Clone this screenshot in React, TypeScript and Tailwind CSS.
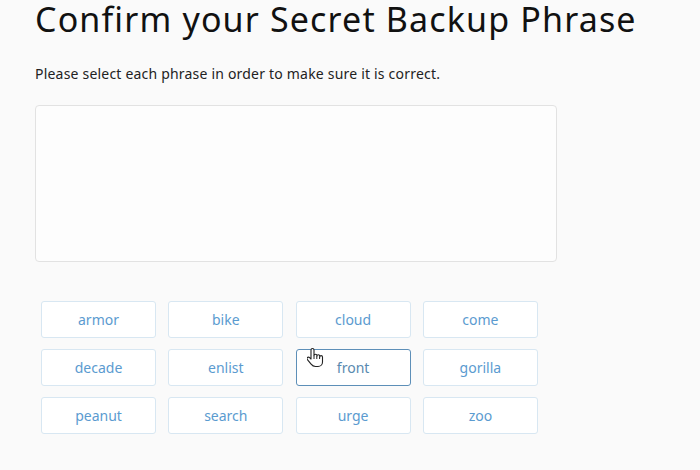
import React from "react";

const words = ["armor", "bike", "cloud", "come", "decade", "enlist", "front", "gorilla", "peanut", "search", "urge", "zoo"];

// Hand pointer, the mouse cursor hovering "front".
function HandCursor() {
  return (
    <svg className="absolute left-[10px] top-[-3px]" width="18" height="22" viewBox="0 0 18 22">
      <path
        d="M5.5 1.5c-.9 0-1.5.7-1.5 1.5v9l-1.4-1.4c-.7-.7-1.7-.7-2.3 0-.5.6-.4 1.4.1 2l3.7 4.6c1 1.3 2.6 2.3 4.4 2.3h2.5c2.6 0 4.5-2 4.5-4.5V10c0-.8-.6-1.4-1.4-1.4-.8 0-1.4.6-1.4 1.4V9.2c0-.8-.6-1.4-1.4-1.4s-1.4.6-1.4 1.4V8.6c0-.8-.6-1.4-1.4-1.4S7 7.8 7 8.6V3c0-.8-.6-1.5-1.5-1.5z"
        fill="#fff"
        stroke="#222"
        strokeWidth="1.1"
        strokeLinejoin="round"
      />
      <path d="M7 8.6v3.4M9.8 9.2v2.8M12.6 10v2" stroke="#222" strokeWidth="1" />
    </svg>
  );
}

function WordButton({ word }: { word: string }) {
  const hovered = word === "front";
  return (
    <div
      className={`relative flex h-[37px] w-[115px] items-center justify-center rounded-[3px] border bg-white text-[14px] ${
        hovered ? "border-[#5d8fb8] text-[#5a8ab0]" : "border-[#d8e7f2] text-[#5b9bd0]"
      }`}
    >
      {word}
      {hovered && <HandCursor />}
    </div>
  );
}

export default function App() {
  return (
    <div className="h-[470px] w-[700px] overflow-hidden bg-[#fafafa] pl-[35px] pt-[1px] font-['Noto_Sans',sans-serif] text-black">
      <h1 className="text-[34px] font-normal leading-[37px] tracking-[1.15px] text-[#111]">Confirm your Secret Backup Phrase</h1>
      <p className="mt-[27px] text-[14px] leading-[18px] tracking-[0.2px] text-[#222]">
        Please select each phrase in order to make sure it is correct.
      </p>
      <div className="mt-[22px] h-[157px] w-[522px] rounded-[4px] border border-[#e2e2e2] bg-[#fdfdfd]" />
      <div className="ml-[6px] mt-[39px] grid w-fit grid-cols-[repeat(4,115px)] gap-x-[12.3px] gap-y-[11px]">
        {words.map((w) => (
          <WordButton key={w} word={w} />
        ))}
      </div>
    </div>
  );
}
